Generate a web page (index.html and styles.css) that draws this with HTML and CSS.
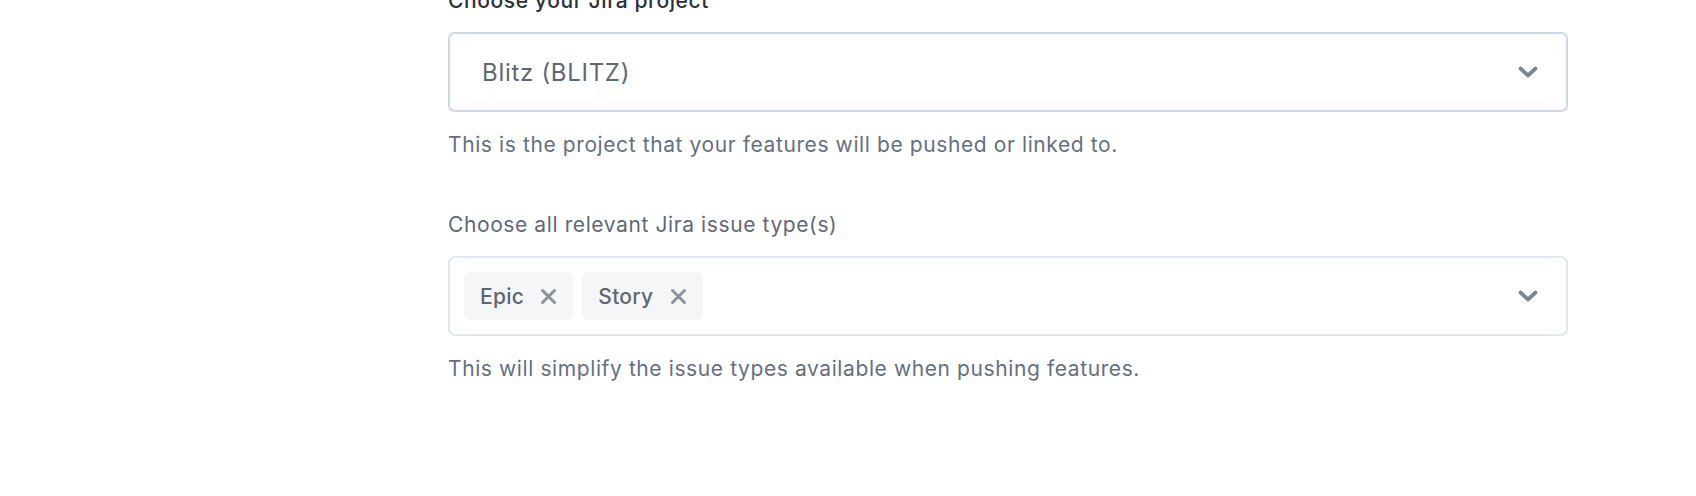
FILE: index.html
```html
<!DOCTYPE html>
<html lang="en">
<head>
<meta charset="utf-8">
<title>Jira settings</title>
<link rel="stylesheet" href="styles.css">
</head>
<body>
<main class="form">
  <section class="field field-first">
    <div class="label label-strong">Choose your Jira project</div>
    <div class="select select-active">
      <span class="value">Blitz (BLITZ)</span>
      <svg class="chevron" width="20" height="12" viewBox="0 0 20 12"><path d="M2.5 2.5 L10 9.5 L17.5 2.5" fill="none" stroke="#7d8793" stroke-width="3.8" stroke-linecap="round" stroke-linejoin="round"/></svg>
    </div>
    <p class="help">This is the project that your features will be pushed or linked to.</p>
  </section>
  <section class="field">
    <div class="label">Choose all relevant Jira issue type(s)</div>
    <div class="select select-multi">
      <div class="chips">
        <span class="chip">Epic<svg class="x" width="17" height="17" viewBox="0 0 17 17"><path d="M2.5 2.5 L14.5 14.5 M14.5 2.5 L2.5 14.5" stroke="#8a939e" stroke-width="3" stroke-linecap="round"/></svg></span>
        <span class="chip">Story<svg class="x" width="17" height="17" viewBox="0 0 17 17"><path d="M2.5 2.5 L14.5 14.5 M14.5 2.5 L2.5 14.5" stroke="#8a939e" stroke-width="3" stroke-linecap="round"/></svg></span>
      </div>
      <svg class="chevron" width="20" height="12" viewBox="0 0 20 12"><path d="M2.5 2.5 L10 9.5 L17.5 2.5" fill="none" stroke="#7d8793" stroke-width="3.8" stroke-linecap="round" stroke-linejoin="round"/></svg>
    </div>
    <p class="help">This will simplify the issue types available when pushing features.</p>
  </section>
</main>
</body>
</html>
```

FILE: styles.css
```css
html, body {
  margin: 0;
  padding: 0;
  background: #ffffff;
}
body {
  font-family: "Inter", "Liberation Sans", sans-serif;
  width: 1696px;
  height: 496px;
  overflow: hidden;
}
.form {
  margin-left: 448px;
  width: 1120px;
  display: flex;
  flex-direction: column;
  gap: 52px;
}
.field-first {
  margin-top: -13px;
}
.label {
  font-size: 21px;
  letter-spacing: 0.6px;
  line-height: 28px;
  color: #5f6977;
  margin-bottom: 17px;
}
.label-strong {
  color: #2a313b;
  font-weight: 500;
}
.select {
  box-sizing: border-box;
  height: 80px;
  border: 2px solid #e3e6ea;
  border-radius: 7px;
  display: flex;
  align-items: center;
  justify-content: space-between;
  padding: 0 28px 0 32px;
}
.select-active {
  border-color: #cfd7e1;
}
.select-multi {
  padding-left: 14px;
}
.value {
  font-size: 24px;
  letter-spacing: 0.7px;
  color: #5f6772;
}
.chevron {
  flex: none;
}
.chips {
  display: flex;
  gap: 9px;
}
.chip {
  display: flex;
  align-items: center;
  gap: 16px;
  height: 48px;
  box-sizing: border-box;
  padding: 0 16px 0 16px;
  background: #f5f6f8;
  border-radius: 6px;
  font-size: 21px;
  letter-spacing: 0.3px;
  font-weight: 500;
  color: #5f6772;
}
.help {
  margin: 19px 0 0;
  font-size: 21px;
  letter-spacing: 0.6px;
  line-height: 28px;
  color: #66707d;
}
```
